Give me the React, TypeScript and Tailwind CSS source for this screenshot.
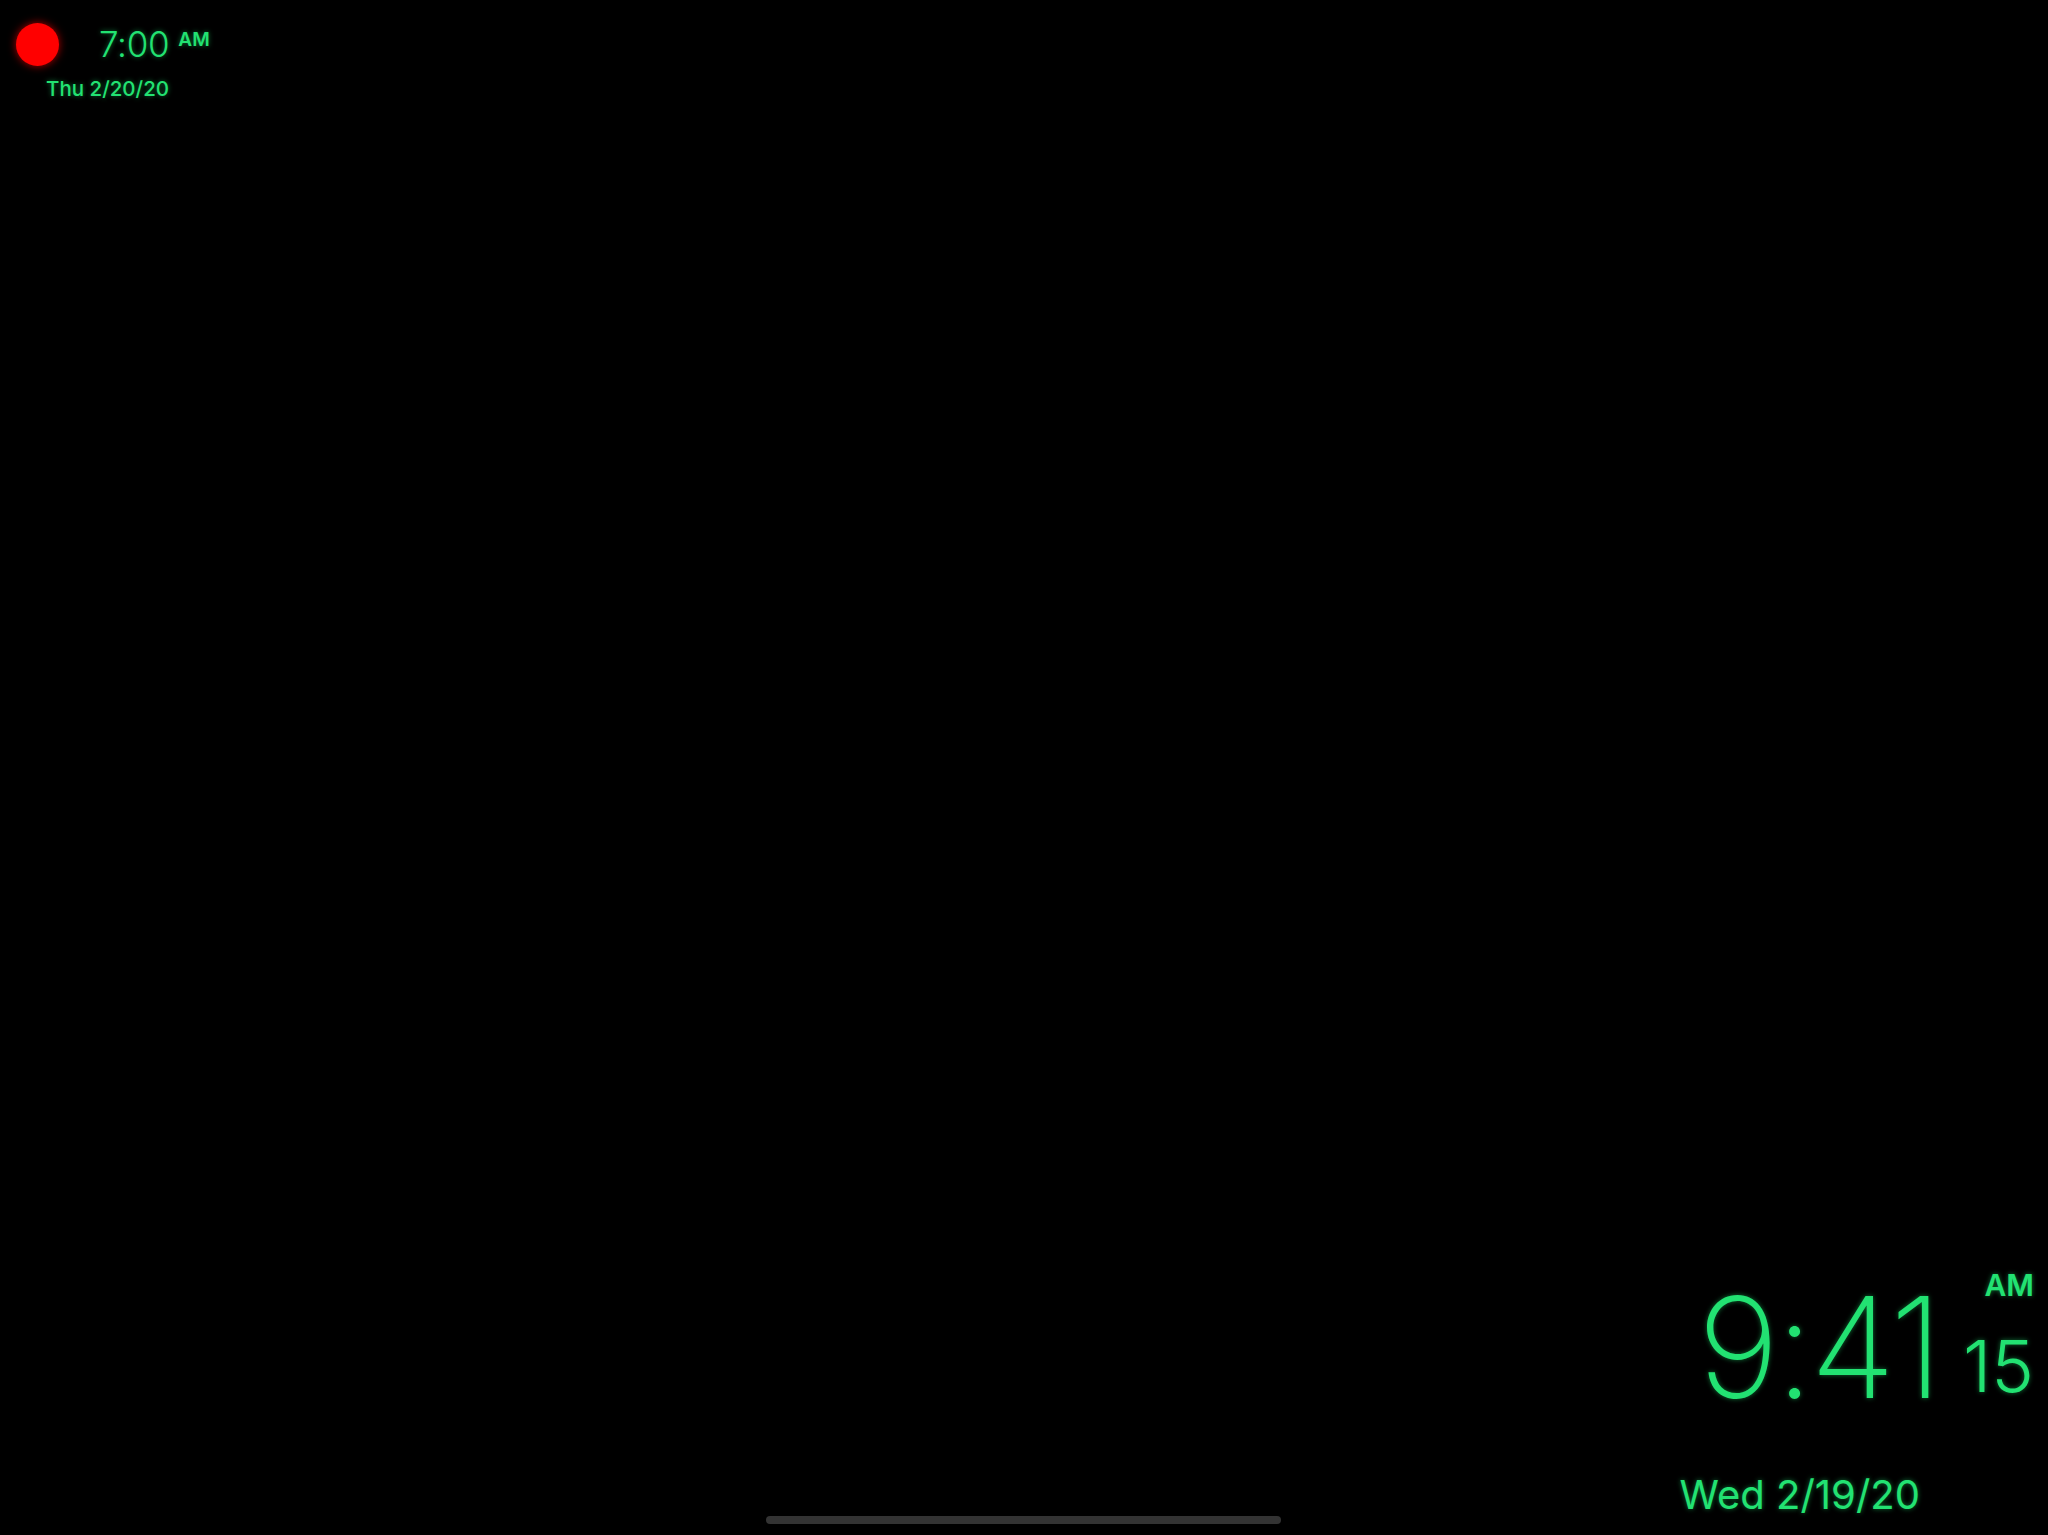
import React from 'react';

const glow = '[text-shadow:0_0_5px_rgba(32,224,112,0.5)]';

export default function App() {
  return (
    <div className="relative flex h-[1535px] w-[2048px] flex-col justify-between overflow-hidden bg-black text-[#22e272] [font-family:Inter,'Liberation_Sans',sans-serif]">
      {/* next alarm */}
      <div className="flex flex-col pl-[16px] pt-[23px]">
        <div className="flex items-center">
          <div className="h-[43px] w-[43px] rounded-full bg-[#ff0000] shadow-[0_0_8px_rgba(255,0,0,0.7)]" />
          <div className={`ml-[40px] flex items-start ${glow}`}>
            <span className="text-[35px] font-light leading-none tracking-[-0.3px]">7:00</span>
            <span className="ml-[9px] mt-[3px] text-[19px] font-semibold leading-none">AM</span>
          </div>
        </div>
        <div className={`ml-[30px] mt-[13px] text-[20.5px] font-medium leading-none ${glow}`}>Thu 2/20/20</div>
      </div>

      {/* current time */}
      <div className="flex justify-end pb-[20px] pr-[14px]">
        <div className={`flex flex-col items-start ${glow}`}>
          <div className="flex items-end">
            <span className="text-[140px] font-extralight leading-none tracking-[-4px]">9:41</span>
            <div className="ml-[24px] flex flex-col items-end">
              <span className="mb-[30px] text-[30px] font-semibold leading-none">AM</span>
              <span className="mb-[15px] text-[72px] font-light leading-none">15</span>
            </div>
          </div>
          <div className="-ml-[18px] mt-[58px] text-[40px] leading-none">Wed 2/19/20</div>
        </div>
      </div>

      {/* home indicator */}
      <div className="absolute bottom-[11px] left-[766px] h-[8px] w-[515px] rounded-full bg-[#333333]" />
    </div>
  );
}
